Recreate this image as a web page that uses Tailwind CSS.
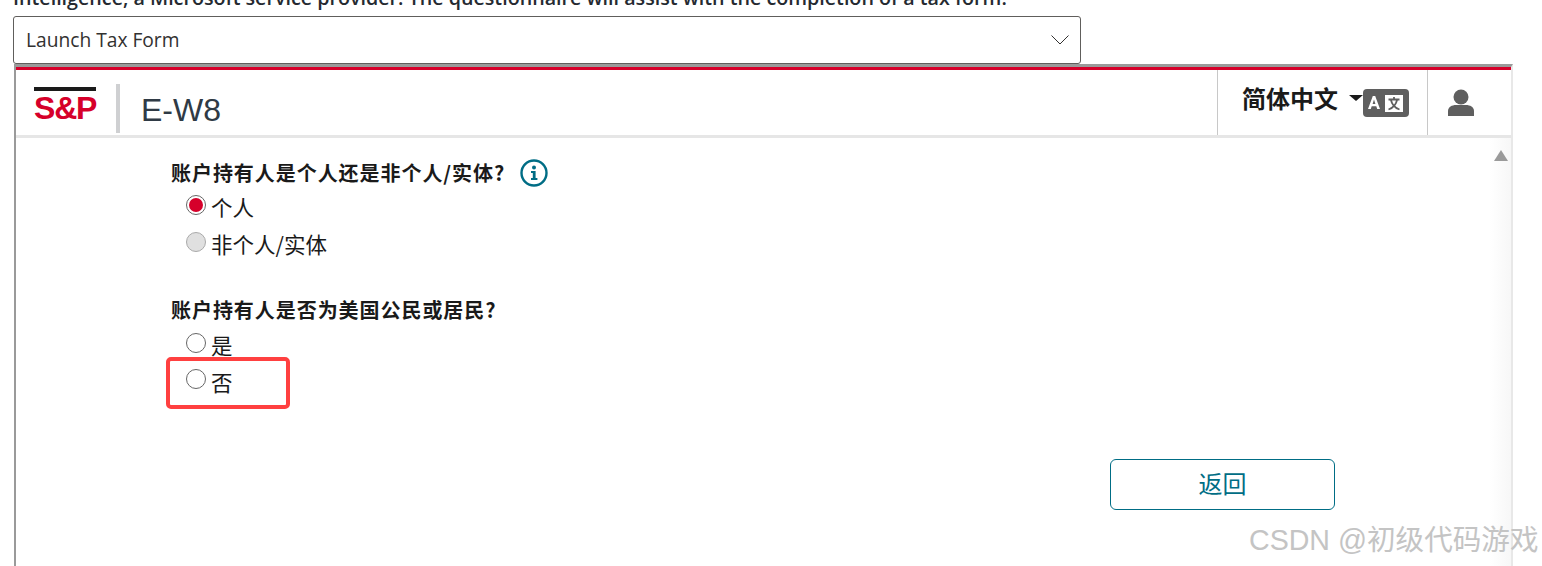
<!DOCTYPE html>
<html lang="zh-CN">

<head>
    <meta charset="UTF-8" />
    <title>Launch Tax Form</title>
    <script src="https://cdn.jsdelivr.net/npm/@tailwindcss/browser@4"></script>
</head>

<body class="bg-white overflow-hidden font-['Open_Sans','Noto_Sans_CJK_SC',sans-serif]">
    <div class="relative w-[1542px] h-[566px] overflow-hidden">

        <!-- clipped intro line -->
        <div class="h-4 pl-[13px] overflow-hidden">
            <p class="mt-[-2px] text-[19.7px] font-semibold leading-[0px] text-[#252a31] whitespace-nowrap">Intelligence, a Microsoft service provider. The questionnaire will assist with the completion of a tax form.</p>
        </div>

        <!-- dropdown -->
        <div class="ml-[13px] w-[1068px] h-12 flex items-center justify-between pl-3 pr-[11px] bg-white border border-[#605e5c] rounded-[3px] text-[#323130] text-[19.2px]">
            <span class="pt-[1px]">Launch Tax Form</span>
            <svg width="18" height="10" viewBox="0 0 18 10" fill="none" stroke="#323130" stroke-width="1"><path d="M0.5 0.5 L9 9 L17.5 0.5" /></svg>
        </div>

        <!-- embedded form frame -->
        <div class="ml-[14px] w-[1499px] h-[502px] border-t-[3px] border-l-2 border-r-2 border-t-[#9a9a9a] border-l-[#9a9a9a] border-r-[#e8e8e8] flex flex-col">
            <div class="h-[3px] bg-[#d6002a]"></div>

            <header class="h-[68px] border-b-[3px] border-[#e6e6e6] flex items-stretch">
                <div class="w-[82px] pl-[18px] pt-[17px] flex flex-col">
                    <div class="w-[62px] h-1 bg-[#1a1a1a]"></div>
                    <span class="mt-[1px] font-['Liberation_Sans',sans-serif] font-bold text-[32px] leading-[33px] tracking-[-1.2px] text-[#d6002a]">S&amp;P</span>
                </div>
                <div class="ml-[18px] mt-[14px] w-1 h-[49px] bg-[#cfd0d2]"></div>
                <h1 class="ml-[21px] pt-[21px] font-['Liberation_Sans',sans-serif] text-[32px] leading-[38px] text-[#2f3a45]">E-W8</h1>

                <div class="ml-auto w-[210px] border-l border-[#c8c8c8] flex items-start pl-6 pt-[12px]">
                    <span class="text-[24px] leading-[32px] font-bold text-[#1a1a1a] font-['Noto_Sans_CJK_SC',sans-serif]">简体中文</span>
                    <span class="ml-[11px] mt-[13px] w-0 h-0 border-x-[7px] border-t-[6px] border-x-transparent border-t-[#1a1a1a]"></span>
                    <svg class="mt-[7px]" width="46" height="28" viewBox="0 0 46 28">
                        <rect width="46" height="28" rx="4" fill="#5f5f5f" />
                        <rect x="22" y="6" width="18" height="17" fill="#fff" />
                        <path d="M5 20 L9.8 7 L12.2 7 L17 20 L14.2 20 L13.3 17.3 L8.7 17.3 L7.8 20 Z M9.6 15 L12.4 15 L11 10.6 Z" fill="#fff" />
                        <path d="M31 8 V10 M25.5 10.5 H36.5 M27.8 10.5 C28.8 15 32 19 36.5 20.5 M34.2 10.5 C33.2 15 30 19 25.5 20.5" fill="none" stroke="#5f5f5f" stroke-width="1.8" />
                    </svg>
                </div>
                <div class="w-[84px] border-l border-[#c8c8c8] pl-5 pt-[19px]">
                    <svg width="26" height="28" viewBox="0 0 26 28" fill="#5f5f5f">
                        <circle cx="13" cy="8" r="7.5" />
                        <path d="M0 27 V22 C0 18 4 16 8 16 H18 C22 16 26 18 26 22 V27 Z" />
                    </svg>
                </div>
            </header>

            <div class="relative flex-1 flex justify-between">
                <main class="pl-[155px] pt-[19px] flex-1 font-['Noto_Sans_CJK_SC',sans-serif] text-[#1a1a1a]">
                    <div class="flex items-center h-[32px]">
                        <h2 class="text-[20px] font-bold tracking-[0.95px]">账户持有人是个人还是非个人/实体?</h2>
                        <svg class="ml-[15px]" width="28" height="28" viewBox="0 0 28 28">
                            <circle cx="14" cy="14" r="12.5" fill="none" stroke="#006d85" stroke-width="2.4" />
                            <circle cx="14" cy="8.6" r="2" fill="#006d85" />
                            <path d="M11 12 H15.6 V19 H17.4 V21 H11 V19 H12.8 V14 H11 Z" fill="#006d85" />
                        </svg>
                    </div>
                    <div class="pl-[15px] flex flex-col">
                        <label class="h-[37px] flex items-center gap-[5px] text-[21.5px]">
                            <span class="w-5 h-5 mb-[6px] rounded-full border border-[#666] bg-white flex items-center justify-center"><span class="w-[14px] h-[14px] rounded-full bg-[#d6002a]"></span></span>
                            <span>个人</span>
                        </label>
                        <label class="h-[37px] flex items-center gap-[5px] text-[21.5px]">
                            <span class="w-5 h-5 mb-[6px] rounded-full border border-[#aaa] bg-[#e0e0e0]"></span>
                            <span>非个人/实体</span>
                        </label>
                    </div>

                    <h2 class="mt-[31px] h-[32px] flex items-center text-[20px] font-bold tracking-[0.95px]">账户持有人是否为美国公民或居民?</h2>
                    <div class="mt-[1px] pl-[15px] flex flex-col">
                        <label class="h-[37px] flex items-center gap-[5px] text-[21.5px]">
                            <span class="w-5 h-5 mb-[6px] rounded-full border border-[#666] bg-white"></span>
                            <span>是</span>
                        </label>
                        <label class="h-[36px] flex items-center gap-[5px] text-[21.5px]">
                            <span class="w-5 h-5 mb-[6px] rounded-full border border-[#666] bg-white"></span>
                            <span>否</span>
                        </label>
                    </div>

                    <div class="mt-[59px] pl-[939px]">
                        <button class="w-[225px] h-[51px] pb-[3px] border border-[#006d85] rounded-[6px] text-[#006d85] text-[24px] bg-white">返回</button>
                    </div>
                </main>

                <!-- scrollbar -->
                <div class="w-[21px] bg-gradient-to-r from-white to-[#f7f7f7] flex justify-center pt-[12px]">
                    <span class="w-0 h-0 border-x-[7.5px] border-b-[11px] border-x-transparent border-b-[#9a9a9a]"></span>
                </div>
            </div>
        </div>

        <!-- red annotation box -->
        <div class="absolute left-[166px] top-[357px] w-[124px] h-[52px] border-4 border-[#ff4040] rounded-[5px]"></div>

        <!-- watermark -->
        <div class="absolute left-[1249px] top-[520px] text-[28.6px] leading-[40px] text-[#c4c4c4] font-['Liberation_Sans','Noto_Sans_CJK_SC',sans-serif] whitespace-nowrap">CSDN @初级代码游戏</div>
    </div>
</body>

</html>
